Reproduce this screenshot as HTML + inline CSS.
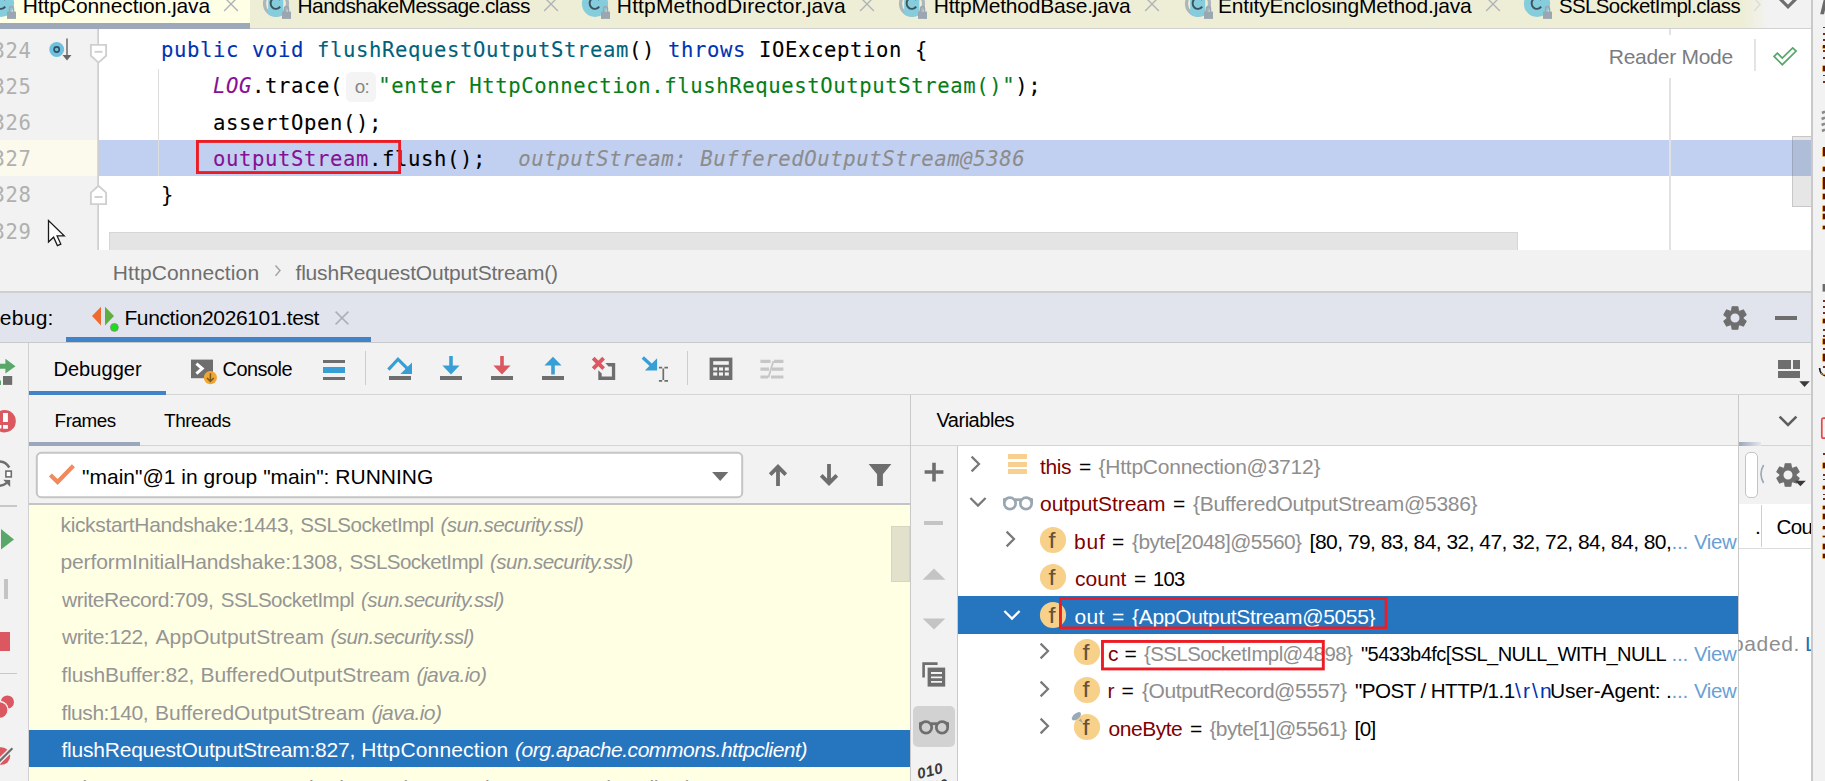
<!DOCTYPE html>
<html lang="en"><head><meta charset="utf-8"><title>HttpConnection.java - Debug</title>
<style>
html,body{margin:0;padding:0;background:#f2f2f2;}
body{width:1825px;height:781px;overflow:hidden;position:relative;font-family:"Liberation Sans", sans-serif;}
#root{position:absolute;left:0;top:0;width:1825px;height:781px;overflow:hidden;}
#root div,#root svg,#root span.t{position:absolute;box-sizing:border-box;}
span.t{white-space:pre;}
.s{font-family:"Liberation Sans", sans-serif;}
.m{font-family:"DejaVu Sans Mono", "Liberation Mono", monospace;}
</style></head><body><div id="root">
<section aria-label="Editor tabs">
<div style="left:0px;top:0px;width:1812px;height:28px;background:#f2f2f2;"></div>
<div style="left:0px;top:0px;width:1770px;height:28px;background:linear-gradient(to right,#eeeed6 0,#eeeed6 1742px,#f2f2f2 1768px);"></div>
<div style="left:0px;top:0px;width:250px;height:24px;background:#ffffe6;"></div>
<div style="left:250px;top:28px;width:1562px;height:1px;background:#d1d1d1;"></div>
<div style="left:0px;top:23px;width:250px;height:6px;background:#9da8bb;"></div>
<svg style="left:-15.1px;top:0px;overflow:hidden;" width="34" height="22" viewBox="0 0 34 22"><circle cx="16" cy="3.8" r="13.1" fill="#85ccdd"/><path d="M20.2 0.0 A5.3 5.6 0 1 0 20.2 6.6" fill="none" stroke="#3a535d" stroke-width="1.9"/><rect x="22" y="11.6" width="9" height="7.3" fill="#9aa7b0"/><path d="M24.5 12 V9 A2 2.4 0 0 1 28.5 9 V12" fill="none" stroke="#9aa7b0" stroke-width="1.5"/></svg>
<span class="t s" style="left:22.7px;top:-5.00px;font-size:21px;line-height:21px;color:#000;letter-spacing:-0.091px;">HttpConnection.java</span>
<svg style="left:221.1px;top:-5.7px;" width="20" height="20" viewBox="0 0 20 20"><path d="M3.0999999999999996 3.0999999999999996 L16.9 16.9 M16.9 3.0999999999999996 L3.0999999999999996 16.9" stroke="#b0b4b8" stroke-width="1.4" fill="none"/></svg>
<svg style="left:260px;top:0px;overflow:hidden;" width="34" height="22" viewBox="0 0 34 22"><defs><clipPath id="band276"><rect x="8.2" y="-20" width="15.1" height="60"/></clipPath></defs><circle cx="16" cy="3.8" r="11.5" fill="none" stroke="#adb6ba" stroke-width="3.2"/><circle cx="16" cy="3.8" r="13.1" fill="#85ccdd" clip-path="url(#band276)"/><path d="M20.2 0.0 A5.3 5.6 0 1 0 20.2 6.6" fill="none" stroke="#3a535d" stroke-width="1.9"/><rect x="22" y="11.6" width="9" height="7.3" fill="#9aa7b0"/><path d="M24.5 12 V9 A2 2.4 0 0 1 28.5 9 V12" fill="none" stroke="#9aa7b0" stroke-width="1.5"/></svg>
<span class="t s" style="left:297.5px;top:-4.00px;font-size:20.95px;line-height:20.95px;color:#000;letter-spacing:-0.544px;">HandshakeMessage.class</span>
<svg style="left:540.6px;top:-5.7px;" width="20" height="20" viewBox="0 0 20 20"><path d="M3.0999999999999996 3.0999999999999996 L16.9 16.9 M16.9 3.0999999999999996 L3.0999999999999996 16.9" stroke="#b0b4b8" stroke-width="1.4" fill="none"/></svg>
<svg style="left:579.1px;top:0px;overflow:hidden;" width="34" height="22" viewBox="0 0 34 22"><circle cx="16" cy="3.8" r="13.1" fill="#85ccdd"/><path d="M20.2 0.0 A5.3 5.6 0 1 0 20.2 6.6" fill="none" stroke="#3a535d" stroke-width="1.9"/><rect x="22" y="11.6" width="9" height="7.3" fill="#9aa7b0"/><path d="M24.5 12 V9 A2 2.4 0 0 1 28.5 9 V12" fill="none" stroke="#9aa7b0" stroke-width="1.5"/></svg>
<span class="t s" style="left:616.8px;top:-5.00px;font-size:21px;line-height:21px;color:#000;letter-spacing:0.164px;">HttpMethodDirector.java</span>
<svg style="left:856.6px;top:-5.7px;" width="20" height="20" viewBox="0 0 20 20"><path d="M3.0999999999999996 3.0999999999999996 L16.9 16.9 M16.9 3.0999999999999996 L3.0999999999999996 16.9" stroke="#b0b4b8" stroke-width="1.4" fill="none"/></svg>
<svg style="left:896px;top:0px;overflow:hidden;" width="34" height="22" viewBox="0 0 34 22"><defs><clipPath id="band912"><rect x="8.2" y="-20" width="15.1" height="60"/></clipPath></defs><circle cx="16" cy="3.8" r="11.5" fill="none" stroke="#adb6ba" stroke-width="3.2"/><circle cx="16" cy="3.8" r="13.1" fill="#85ccdd" clip-path="url(#band912)"/><path d="M20.2 0.0 A5.3 5.6 0 1 0 20.2 6.6" fill="none" stroke="#3a535d" stroke-width="1.9"/><rect x="22" y="11.6" width="9" height="7.3" fill="#9aa7b0"/><path d="M24.5 12 V9 A2 2.4 0 0 1 28.5 9 V12" fill="none" stroke="#9aa7b0" stroke-width="1.5"/></svg>
<span class="t s" style="left:933.8px;top:-5.00px;font-size:21px;line-height:21px;color:#000;letter-spacing:-0.217px;">HttpMethodBase.java</span>
<svg style="left:1141.6px;top:-5.7px;" width="20" height="20" viewBox="0 0 20 20"><path d="M3.0999999999999996 3.0999999999999996 L16.9 16.9 M16.9 3.0999999999999996 L3.0999999999999996 16.9" stroke="#b0b4b8" stroke-width="1.4" fill="none"/></svg>
<svg style="left:1181.5px;top:0px;overflow:hidden;" width="34" height="22" viewBox="0 0 34 22"><defs><clipPath id="band1197"><rect x="8.2" y="-20" width="15.1" height="60"/></clipPath></defs><circle cx="16" cy="3.8" r="11.5" fill="none" stroke="#adb6ba" stroke-width="3.2"/><circle cx="16" cy="3.8" r="13.1" fill="#85ccdd" clip-path="url(#band1197)"/><path d="M20.2 0.0 A5.3 5.6 0 1 0 20.2 6.6" fill="none" stroke="#3a535d" stroke-width="1.9"/><rect x="22" y="11.6" width="9" height="7.3" fill="#9aa7b0"/><path d="M24.5 12 V9 A2 2.4 0 0 1 28.5 9 V12" fill="none" stroke="#9aa7b0" stroke-width="1.5"/></svg>
<span class="t s" style="left:1218px;top:-5.00px;font-size:21px;line-height:21px;color:#000;letter-spacing:-0.172px;">EntityEnclosingMethod.java</span>
<svg style="left:1482.6px;top:-5.7px;" width="20" height="20" viewBox="0 0 20 20"><path d="M3.0999999999999996 3.0999999999999996 L16.9 16.9 M16.9 3.0999999999999996 L3.0999999999999996 16.9" stroke="#b0b4b8" stroke-width="1.4" fill="none"/></svg>
<svg style="left:1521px;top:0px;overflow:hidden;" width="34" height="22" viewBox="0 0 34 22"><circle cx="16" cy="3.8" r="13.1" fill="#85ccdd"/><path d="M20.2 0.0 A5.3 5.6 0 1 0 20.2 6.6" fill="none" stroke="#3a535d" stroke-width="1.9"/><rect x="22" y="11.6" width="9" height="7.3" fill="#9aa7b0"/><path d="M24.5 12 V9 A2 2.4 0 0 1 28.5 9 V12" fill="none" stroke="#9aa7b0" stroke-width="1.5"/></svg>
<span class="t s" style="left:1558.9px;top:-4.00px;font-size:20.43px;line-height:20.43px;color:#000;letter-spacing:-0.561px;">SSLSocketImpl.class</span>
<svg style="left:1750px;top:0px;" width="16" height="14" viewBox="0 0 16 14"><path d="M4 -2 L10 4.5 L4 11" fill="none" stroke="#e0dfd6" stroke-width="1.6"/></svg>
<svg style="left:1774px;top:0px;" width="28" height="12" viewBox="0 0 28 12"><path d="M3.8 -3.4 L14 6.8 L24.2 -3.4" fill="none" stroke="#6e6e6e" stroke-width="3.2"/></svg>
</section>
<section aria-label="Code editor">
<div style="left:0px;top:29px;width:1812px;height:221px;background:#fff;"></div>
<div style="left:0px;top:28.5px;width:98px;height:222px;background:#f2f2f2;"></div>
<div style="left:97px;top:29px;width:1px;height:221px;background:#d9d9d9;"></div>
<div style="left:98px;top:29px;width:1px;height:221px;background:#cfcfcf;"></div>
<div style="left:99px;top:140px;width:1713px;height:36px;background:#c1d0f0;"></div>
<div style="left:0px;top:140px;width:97px;height:36px;background:#fcfaed;"></div>
<div style="left:158px;top:69px;width:1.4px;height:107px;background:#dedede;"></div>
<div style="left:1669px;top:29px;width:2px;height:5.5px;background:#e2e2e2;"></div>
<div style="left:1669px;top:78px;width:2px;height:172px;background:#e2e2e2;"></div>
<div style="left:109px;top:231.5px;width:1409px;height:19px;background:#e4e4e4;border:1px solid #d6d6d6;border-bottom:none;"></div>
<span class="t m" style="left:-7.6px;top:41.00px;font-size:20.6px;line-height:20.6px;color:#b0b0b0;letter-spacing:0.599px;">324</span>
<span class="t m" style="left:-7.6px;top:77.10px;font-size:20.6px;line-height:20.6px;color:#b0b0b0;letter-spacing:0.599px;">325</span>
<span class="t m" style="left:-7.6px;top:113.20px;font-size:20.6px;line-height:20.6px;color:#b0b0b0;letter-spacing:0.599px;">326</span>
<span class="t m" style="left:-7.6px;top:149.30px;font-size:20.6px;line-height:20.6px;color:#b0b0b0;letter-spacing:0.599px;">327</span>
<span class="t m" style="left:-7.6px;top:185.40px;font-size:20.6px;line-height:20.6px;color:#b0b0b0;letter-spacing:0.599px;">328</span>
<span class="t m" style="left:-7.6px;top:221.50px;font-size:20.6px;line-height:20.6px;color:#b0b0b0;letter-spacing:0.599px;">329</span>
<span class="t m" style="left:161.0px;top:40.30px;font-size:20.6px;line-height:20.6px;color:#0033b3;letter-spacing:0.601px;-webkit-text-stroke:0.1px;">public void</span>
<span class="t m" style="left:317.0px;top:40.30px;font-size:20.6px;line-height:20.6px;color:#00627a;letter-spacing:0.601px;-webkit-text-stroke:0.1px;">flushRequestOutputStream</span>
<span class="t m" style="left:629.0px;top:40.30px;font-size:20.6px;line-height:20.6px;color:#000;letter-spacing:0.594px;-webkit-text-stroke:0.1px;">()</span>
<span class="t m" style="left:668.0px;top:40.30px;font-size:20.6px;line-height:20.6px;color:#0033b3;letter-spacing:0.599px;-webkit-text-stroke:0.1px;">throws</span>
<span class="t m" style="left:759.0px;top:40.30px;font-size:20.6px;line-height:20.6px;color:#000;letter-spacing:0.601px;-webkit-text-stroke:0.1px;">IOException {</span>
<span class="t m" style="left:213.0px;top:76.40px;font-size:20.6px;line-height:20.6px;color:#871094;letter-spacing:0.599px;font-style:italic;-webkit-text-stroke:0.1px;">LOG</span>
<span class="t m" style="left:252.0px;top:76.40px;font-size:20.6px;line-height:20.6px;color:#000;letter-spacing:0.600px;-webkit-text-stroke:0.1px;">.trace(</span>
<div style="left:346px;top:71.6px;width:30px;height:30px;background:#f4f4f4;border-radius:5.5px;"></div>
<span class="t s" style="left:354.7px;top:78.20px;font-size:18.85px;line-height:18.85px;color:#868686;letter-spacing:-0.680px;">o:</span>
<span class="t m" style="left:378.2px;top:76.40px;font-size:20.6px;line-height:20.6px;color:#067d17;letter-spacing:0.601px;-webkit-text-stroke:0.1px;">&quot;enter HttpConnection.flushRequestOutputStream()&quot;</span>
<span class="t m" style="left:1015.2px;top:76.40px;font-size:20.6px;line-height:20.6px;color:#000;letter-spacing:0.594px;-webkit-text-stroke:0.1px;">);</span>
<span class="t m" style="left:213.0px;top:112.50px;font-size:20.6px;line-height:20.6px;color:#000;letter-spacing:0.601px;-webkit-text-stroke:0.1px;">assertOpen();</span>
<span class="t m" style="left:213.0px;top:148.60px;font-size:20.6px;line-height:20.6px;color:#871094;letter-spacing:0.600px;-webkit-text-stroke:0.1px;">outputStream</span>
<span class="t m" style="left:369.0px;top:148.60px;font-size:20.6px;line-height:20.6px;color:#000;letter-spacing:0.601px;-webkit-text-stroke:0.1px;">.flush();</span>
<span class="t m" style="left:518.3px;top:148.60px;font-size:20.6px;line-height:20.6px;color:#8c8c8c;letter-spacing:0.601px;font-style:italic;-webkit-text-stroke:0.1px;">outputStream: BufferedOutputStream@5386</span>
<span class="t m" style="left:161.0px;top:184.70px;font-size:20.6px;line-height:20.6px;color:#000;letter-spacing:0.594px;-webkit-text-stroke:0.1px;">}</span>
<svg style="left:196px;top:139.9px;" width="205.10000000000002" height="34.0" viewBox="0 0 205.10000000000002 34.0"><rect x="1.45" y="1.45" width="202.20" height="31.10" fill="none" stroke="#ed1c24" stroke-width="2.9"/></svg>
<svg style="left:46px;top:36px;" width="28" height="28" viewBox="0 0 28 28"><circle cx="10.7" cy="13.5" r="7.4" fill="#6ec0de"/><circle cx="10.7" cy="13.5" r="2.6" fill="none" stroke="#31505e" stroke-width="1.6"/><path d="M21 2.5 V19" stroke="#686868" stroke-width="1.5" fill="none"/><path d="M16.5 19 H25.5 L21 24.4 Z" fill="#686868"/></svg>
<svg style="left:88px;top:42px;" width="22" height="24" viewBox="0 0 22 24"><path d="M2.9 2.9 H18.1 V13.8 L10.5 20.6 L2.9 13.8 Z" fill="#fff" stroke="#cfcfcf" stroke-width="1.9"/><path d="M6.5 9.8 H14.5" stroke="#cfcfcf" stroke-width="1.9"/></svg>
<svg style="left:88px;top:183px;" width="22" height="24" viewBox="0 0 22 24"><path d="M2.9 21.1 H18.1 V9.6 L10.5 2.8 L2.9 9.6 Z" fill="#fff" stroke="#cfcfcf" stroke-width="1.9"/><path d="M6.5 14 H14.5" stroke="#cfcfcf" stroke-width="1.9"/></svg>
<span class="t s" style="left:1608.8px;top:46.00px;font-size:21px;line-height:21px;color:#7a7c82;letter-spacing:-0.296px;">Reader Mode</span>
<div style="left:1754px;top:39px;width:2px;height:32px;background:#e4e4e4;"></div>
<svg style="left:1770px;top:44px;" width="30" height="24" viewBox="0 0 30 24"><path d="M4.1 12.4 L7.4 9.1 L12.3 14 L22.7 3.9 L26.1 7.1 L12.3 20.7 Z" fill="none" stroke="#57a76b" stroke-width="1.7" stroke-linejoin="miter"/></svg>
<div style="left:1792px;top:135.5px;width:20px;height:71px;background:rgba(80,80,80,0.14);border:1px solid rgba(90,90,90,0.22);"></div>
<svg style="left:46px;top:218px;" width="24" height="32" viewBox="0 0 24 32"><path d="M2.5 2.5 V24 L7.6 19.2 L11.4 27.6 L14.8 26.1 L11.1 17.9 H18.2 Z" fill="#fff" stroke="#1a1a1a" stroke-width="1.3" stroke-linejoin="miter"/></svg>
</section>
<section aria-label="Breadcrumbs">
<div style="left:0px;top:250px;width:1812px;height:41.5px;background:#f2f2f2;"></div>
<span class="t s" style="left:112.8px;top:262.00px;font-size:21px;line-height:21px;color:#6e6e6e;letter-spacing:0.117px;">HttpConnection</span>
<svg style="left:272px;top:262px;" width="12" height="18" viewBox="0 0 12 18"><path d="M3.5 3.5 L8 8.6 L3.5 13.7" fill="none" stroke="#a0a0a0" stroke-width="1.4"/></svg>
<span class="t s" style="left:295.5px;top:262.00px;font-size:21px;line-height:21px;color:#6e6e6e;letter-spacing:-0.192px;">flushRequestOutputStream()</span>
<div style="left:0px;top:291px;width:1812px;height:2px;background:#cfcfcf;"></div>
</section>
<section aria-label="Debug tool window header">
<div style="left:0px;top:293px;width:1812px;height:49px;background:#e1e4ed;"></div>
<div style="left:0px;top:341.8px;width:1812px;height:1.2px;background:#c9c9cc;"></div>
<span class="t s" style="left:-15.58px;top:307.00px;font-size:21px;line-height:21px;color:#000;letter-spacing:0.260px;">Debug:</span>
<svg style="left:90px;top:304px;" width="32" height="30" viewBox="0 0 32 30"><path d="M11 2.8 V21.4 L2 12.1 Z" fill="#ee6b2f"/><path d="M15 2.8 V21.4 L24 12.1 Z" fill="#5fae40"/><circle cx="24.4" cy="23.4" r="4.9" fill="#e1e4ed"/><circle cx="24.4" cy="23.4" r="3.9" fill="#17e017" stroke="#7d8f7d" stroke-width="0.9"/></svg>
<span class="t s" style="left:124.4px;top:307.00px;font-size:21px;line-height:21px;color:#000;letter-spacing:-0.366px;">Function2026101.test</span>
<svg style="left:332px;top:308px;" width="20" height="20" viewBox="0 0 20 20"><path d="M3.5999999999999996 3.5999999999999996 L16.4 16.4 M16.4 3.5999999999999996 L3.5999999999999996 16.4" stroke="#aab0b6" stroke-width="1.5" fill="none"/></svg>
<div style="left:66px;top:337.4px;width:304.5px;height:5px;background:#4083c9;"></div>
<svg style="left:1720px;top:302.9px;" width="30" height="30" viewBox="0 0 30 30"><path d="M12.13 3.76 L17.87 3.76 L18.40 7.65 L19.66 8.38 L23.30 6.89 L26.17 11.87 L23.07 14.27 L23.07 15.73 L26.17 18.13 L23.30 23.11 L19.66 21.62 L18.40 22.35 L17.87 26.24 L12.13 26.24 L11.60 22.35 L10.34 21.62 L6.70 23.11 L3.83 18.13 L6.93 15.73 L6.93 14.27 L3.83 11.87 L6.70 6.89 L10.34 8.38 L11.60 7.65 Z M19.50 15.00 A4.5 4.5 0 1 0 10.50 15.00 A4.5 4.5 0 1 0 19.50 15.00 Z" fill="#6e6e6e" fill-rule="evenodd"/><path d="M12.13 3.76 L17.87 3.76 L18.40 7.65 L19.66 8.38 L23.30 6.89 L26.17 11.87 L23.07 14.27 L23.07 15.73 L26.17 18.13 L23.30 23.11 L19.66 21.62 L18.40 22.35 L17.87 26.24 L12.13 26.24 L11.60 22.35 L10.34 21.62 L6.70 23.11 L3.83 18.13 L6.93 15.73 L6.93 14.27 L3.83 11.87 L6.70 6.89 L10.34 8.38 L11.60 7.65 Z" fill="none" stroke="#6e6e6e" stroke-width="1.1" stroke-linejoin="round"/></svg>
<div style="left:1774.6px;top:315.8px;width:22.6px;height:4.2px;background:#6e6e6e;"></div>
</section>
<section aria-label="Debugger toolbar">
<div style="left:0px;top:343px;width:1812px;height:51.4px;background:#f2f2f2;"></div>
<div style="left:29px;top:394.2px;width:1783px;height:1.2px;background:#d4d4d4;"></div>
<div style="left:28px;top:343px;width:1.2px;height:438px;background:#d0d0d0;"></div>
<span class="t s" style="left:53.4px;top:359.00px;font-size:20px;line-height:20px;color:#000;letter-spacing:0.060px;">Debugger</span>
<div style="left:29px;top:391px;width:137px;height:4.4px;background:#4083c9;"></div>
<svg style="left:188px;top:356px;" width="32" height="32" viewBox="0 0 32 32"><rect x="3" y="3.6" width="22" height="18.6" fill="#6e6e6e"/><path d="M8.4 7.6 L14.2 12.6 L8.4 17.6" fill="none" stroke="#fff" stroke-width="3"/><circle cx="22.4" cy="21.6" r="6.6" fill="#f2a632"/><path d="M22.4 17.2 V25 M19 22 L22.4 25.4 L25.8 22" fill="none" stroke="#7a5a20" stroke-width="1.6"/></svg>
<span class="t s" style="left:222.6px;top:360.00px;font-size:19.96px;line-height:19.96px;color:#000;letter-spacing:-0.544px;">Console</span>
<div style="left:323px;top:359.6px;width:22.4px;height:3.4px;background:#6e6e6e;"></div>
<div style="left:323px;top:367.2px;width:22.4px;height:5.4px;background:#389fd6;"></div>
<div style="left:323px;top:376.6px;width:22.4px;height:3.4px;background:#6e6e6e;"></div>
<div style="left:365px;top:351px;width:1.3px;height:34px;background:#cdcdcd;"></div>
<div style="left:388.6px;top:376.4px;width:22.8px;height:3.6px;background:#6e6e6e;"></div>
<svg style="left:384.6px;top:352.7px;" width="30" height="24" viewBox="0 0 30 24"><path d="M3.4 16.6 L13 6.2 L22.4 15.6" fill="none" stroke="#389fd6" stroke-width="3.2" stroke-linejoin="miter"/><path d="M27 9.4 V21 H15.4 Z" fill="#389fd6"/></svg>
<div style="left:439.6px;top:376.4px;width:22.8px;height:3.6px;background:#6e6e6e;"></div>
<svg style="left:436px;top:354px;" width="30" height="24" viewBox="0 0 30 24"><path d="M13.2 2 H16.8 V11.5 H23.6 L15 20.4 L6.4 11.5 H13.2 Z" fill="#389fd6"/></svg>
<div style="left:490.6px;top:376.4px;width:22.8px;height:3.6px;background:#6e6e6e;"></div>
<svg style="left:487px;top:354px;" width="30" height="24" viewBox="0 0 30 24"><path d="M13.2 2 H16.8 V11.5 H23.6 L15 20.4 L6.4 11.5 H13.2 Z" fill="#db5860"/></svg>
<div style="left:541.6px;top:376.4px;width:22.8px;height:3.6px;background:#6e6e6e;"></div>
<svg style="left:538px;top:354px;" width="30" height="24" viewBox="0 0 30 24"><path d="M13.2 20.6 H16.8 V11.6 H23.6 L15 2.8 L6.4 11.6 H13.2 Z" fill="#389fd6"/></svg>
<svg style="left:588px;top:354px;" width="30" height="30" viewBox="0 0 30 30"><path d="M5.2 4.2 L15.6 14.6 M15.6 4.2 L5.2 14.6" stroke="#db5860" stroke-width="3.9" fill="none"/><path d="M17.3 9.1 H27.2 V25.9 H10.3 V16.2 L13.7 19.6 V22.6 H23.9 V12.4 H20.6 Z" fill="#6e6e6e"/></svg>
<svg style="left:638px;top:352.4px;" width="34" height="32" viewBox="0 0 34 32"><path d="M4.8 5.6 L16.2 16" stroke="#389fd6" stroke-width="3.4" fill="none"/><path d="M19.1 6.2 V18.6 H6.9 Z" fill="#389fd6"/><path d="M20.9 15.7 H24.2 M26.4 15.7 H30 M20.9 28.9 H24.2 M26.4 28.9 H30 M25.3 16.6 V28" stroke="#6e6e6e" stroke-width="1.7" fill="none"/></svg>
<div style="left:686.6px;top:351px;width:1.3px;height:34px;background:#cdcdcd;"></div>
<svg style="left:708px;top:356px;" width="28" height="26" viewBox="0 0 28 26"><rect x="1.6" y="1.6" width="22.8" height="22.4" fill="#6e6e6e"/><rect x="5.2" y="5.2" width="15.6" height="3.6" fill="#f2f2f2"/><rect x="5.2" y="11.4" width="4" height="3.2" fill="#f2f2f2"/><rect x="5.2" y="16.4" width="4" height="3.2" fill="#f2f2f2"/><rect x="11.0" y="11.4" width="4" height="3.2" fill="#f2f2f2"/><rect x="11.0" y="16.4" width="4" height="3.2" fill="#f2f2f2"/><rect x="16.8" y="11.4" width="4" height="3.2" fill="#f2f2f2"/><rect x="16.8" y="16.4" width="4" height="3.2" fill="#f2f2f2"/></svg>
<svg style="left:758px;top:357px;" width="30" height="24" viewBox="0 0 30 24"><path d="M2.4 4.4 H12.6 M16 4.4 H25.4 M2.4 12.2 H11 M14 12.2 H25.4 M2.4 20 H10 M13 20 H25.4" stroke="#c6c6c6" stroke-width="3.2" fill="none"/><path d="M15.4 4 L10.4 20.4" stroke="#c6c6c6" stroke-width="1.8" fill="none"/></svg>
<div style="left:1778px;top:359.7px;width:12.6px;height:9px;background:#6e6e6e;"></div>
<div style="left:1793px;top:359.7px;width:7.4px;height:9px;background:#6e6e6e;"></div>
<div style="left:1778px;top:371px;width:22.4px;height:7.4px;background:#6e6e6e;"></div>
<svg style="left:1798px;top:380px;" width="14" height="8" viewBox="0 0 14 8"><path d="M1.3 1.3 H11.8 L6.5 7 Z" fill="#3a3a3a"/></svg>
</section>
<section aria-label="Debug actions">
<svg style="left:0px;top:356px;" width="28" height="32" viewBox="0 0 28 32"><path d="M-3 7.7 H5.4 V2.8 L15.5 10.2 L5.4 17.6 V12.7 H-3 Z" fill="#59a869"/><path d="M-2 24.6 H1 V29 H-2 Z" fill="#59a869"/><rect x="3" y="20" width="9.2" height="8.9" fill="#6e6e6e"/></svg>
<svg style="left:0px;top:406px;" width="28" height="30" viewBox="0 0 28 30"><circle cx="4.6" cy="15.2" r="11.2" fill="#db5860"/><path d="M3 7 H7.9 V16 H3 Z M3 19 H7.9 V22.8 H3 Z" fill="#fff"/><path d="M-2 19 H1.4 V22.4 H-2 Z" fill="#fff"/></svg>
<svg style="left:0px;top:458px;" width="28" height="34" viewBox="0 0 28 34"><path d="M-3 3.56 A12.2 12.2 0 0 1 9.3 9.5" fill="none" stroke="#6e6e6e" stroke-width="2.5"/><path d="M6.8 24.9 A12.2 12.2 0 0 1 -3 27.6" fill="none" stroke="#6e6e6e" stroke-width="2.5"/><path d="M3.2 21.7 L10.2 22 L10.2 29 Z" fill="#6e6e6e"/><rect x="5.9" y="13.1" width="5.4" height="5.8" fill="#fff" stroke="#6e6e6e" stroke-width="1.6"/></svg>
<div style="left:0px;top:505.4px;width:17px;height:1.2px;background:#c8c8c8;"></div>
<svg style="left:0px;top:526px;" width="20" height="26" viewBox="0 0 20 26"><path d="M1 3 L14 13.4 L1 23.6 Z" fill="#59a869"/></svg>
<div style="left:4px;top:579px;width:4.2px;height:20px;background:#c4c4c4;"></div>
<div style="left:0px;top:632px;width:10.4px;height:18.6px;background:#db5860;"></div>
<div style="left:0px;top:673px;width:17px;height:1.2px;background:#c8c8c8;"></div>
<svg style="left:0px;top:690px;" width="20" height="32" viewBox="0 0 20 32"><circle cx="7.4" cy="12" r="6.6" fill="#db5860"/><circle cx="-0.4" cy="20" r="9.2" fill="#f2f2f2"/><circle cx="-0.4" cy="20" r="7.8" fill="#db5860"/></svg>
<svg style="left:0px;top:742px;" width="20" height="30" viewBox="0 0 20 30"><circle cx="1.4" cy="14" r="8.8" fill="#db5860"/><path d="M-2 20.6 L12.4 6.2" stroke="#f2f2f2" stroke-width="5"/><path d="M-2 20.6 L12.4 6.2" stroke="#6e6e6e" stroke-width="2.2"/></svg>
</section>
<section aria-label="Panel headers">
<div style="left:29.2px;top:395.4px;width:1783px;height:50px;background:#f2f2f2;"></div>
<div style="left:29.2px;top:445px;width:1783px;height:1.2px;background:#d4d4d4;"></div>
<span class="t s" style="left:54.6px;top:412.00px;font-size:18.82px;line-height:18.82px;color:#000;letter-spacing:-0.450px;">Frames</span>
<span class="t s" style="left:164.0px;top:411.00px;font-size:19.0px;line-height:19.0px;color:#000;letter-spacing:-0.467px;">Threads</span>
<div style="left:29.2px;top:441.6px;width:111px;height:4.4px;background:#9ba7bd;"></div>
<div style="left:910px;top:395.4px;width:1.2px;height:386px;background:#c9c9c9;"></div>
<span class="t s" style="left:936.4px;top:410.00px;font-size:20px;line-height:20px;color:#000;letter-spacing:-0.462px;">Variables</span>
<div style="left:1738px;top:395.4px;width:1.2px;height:386px;background:#c9c9c9;"></div>
<svg style="left:1774px;top:410px;" width="28" height="22" viewBox="0 0 28 22"><path d="M5.6 6.6 L14 15 L22.4 6.6" fill="none" stroke="#5e5e5e" stroke-width="2.6"/></svg>
<div style="left:1739.2px;top:442.2px;width:22px;height:3.6px;background:linear-gradient(to right,#9ba7bd,#e4e6ec);"></div>
</section>
<section aria-label="Thread selector">
<div style="left:29.2px;top:446.2px;width:881px;height:58px;background:#f2f2f2;"></div>
<svg style="left:34.6px;top:451.4px;" width="709" height="48" viewBox="0 0 709 48"><rect x="1.8" y="1.8" width="705.4" height="44.4" rx="4.5" fill="#fff" stroke="#c5c5c5" stroke-width="2"/></svg>
<svg style="left:46px;top:460px;" width="34" height="28" viewBox="0 0 34 28"><path d="M4.4 15 L11.6 22 L27.4 5.8" fill="none" stroke="#f08a5d" stroke-width="4.2"/></svg>
<span class="t s" style="left:82.0px;top:466.00px;font-size:21px;line-height:21px;color:#000;letter-spacing:0.008px;">&quot;main&quot;@1 in group &quot;main&quot;: RUNNING</span>
<svg style="left:710px;top:470px;" width="20" height="12" viewBox="0 0 20 12"><path d="M2.1 1.9 H18.3 L10.2 11 Z" fill="#6e6e6e"/></svg>
<svg style="left:764px;top:460px;" width="28" height="30" viewBox="0 0 28 30"><path d="M14 7 V26 M6.2 14.6 L14 6.8 L21.8 14.6" fill="none" stroke="#6e6e6e" stroke-width="3.8"/></svg>
<svg style="left:815px;top:460px;" width="28" height="30" viewBox="0 0 28 30"><path d="M14 4 V23 M6.2 15.4 L14 23.2 L21.8 15.4" fill="none" stroke="#6e6e6e" stroke-width="3.8"/></svg>
<svg style="left:866px;top:460px;" width="28" height="30" viewBox="0 0 28 30"><path d="M2.6 4 H25.4 L16.9 14.2 V26 H11.1 V14.2 Z" fill="#6e6e6e"/></svg>
</section>
<section aria-label="Frames">
<div style="left:29.2px;top:503.4px;width:881px;height:278px;background:#ffffe4;"></div>
<div style="left:29.2px;top:503.2px;width:881px;height:1.8px;background:#c4c4c4;"></div>
<div style="left:891.2px;top:526px;width:18.8px;height:56.2px;background:#e2e2cc;border:1px solid #d6d6c0;"></div>
<span class="t s" style="left:60.5px;top:514.00px;font-size:21px;line-height:21px;color:#959595;letter-spacing:-0.352px;">kickstartHandshake:1443,</span>
<span class="t s" style="left:300.2px;top:515.00px;font-size:20.56px;line-height:20.56px;color:#959595;letter-spacing:-0.550px;">SSLSocketImpl</span>
<span class="t s" style="left:440.5px;top:515.00px;font-size:20.58px;line-height:20.58px;color:#959595;letter-spacing:-0.558px;font-style:italic;">(sun.security.ssl)</span>
<span class="t s" style="left:60.5px;top:551.00px;font-size:21px;line-height:21px;color:#959595;letter-spacing:-0.120px;">performInitialHandshake:1308,</span>
<span class="t s" style="left:349.6px;top:552.00px;font-size:20.57px;line-height:20.57px;color:#959595;letter-spacing:-0.550px;">SSLSocketImpl</span>
<span class="t s" style="left:490.0px;top:552.00px;font-size:20.58px;line-height:20.58px;color:#959595;letter-spacing:-0.558px;font-style:italic;">(sun.security.ssl)</span>
<span class="t s" style="left:62.0px;top:589.00px;font-size:21px;line-height:21px;color:#959595;letter-spacing:-0.460px;">writeRecord:709,</span>
<span class="t s" style="left:220.8px;top:590.00px;font-size:20.54px;line-height:20.54px;color:#959595;letter-spacing:-0.550px;">SSLSocketImpl</span>
<span class="t s" style="left:361.0px;top:590.00px;font-size:20.58px;line-height:20.58px;color:#959595;letter-spacing:-0.558px;font-style:italic;">(sun.security.ssl)</span>
<span class="t s" style="left:62.0px;top:626.00px;font-size:21px;line-height:21px;color:#959595;letter-spacing:-0.501px;">write:122,</span>
<span class="t s" style="left:155.5px;top:626.00px;font-size:21px;line-height:21px;color:#959595;letter-spacing:0.029px;">AppOutputStream</span>
<span class="t s" style="left:330.5px;top:627.00px;font-size:20.64px;line-height:20.64px;color:#959595;letter-spacing:-0.548px;font-style:italic;">(sun.security.ssl)</span>
<span class="t s" style="left:61.5px;top:664.00px;font-size:21px;line-height:21px;color:#959595;letter-spacing:-0.150px;">flushBuffer:82,</span>
<span class="t s" style="left:200.4px;top:664.00px;font-size:21px;line-height:21px;color:#959595;letter-spacing:-0.007px;">BufferedOutputStream</span>
<span class="t s" style="left:416.5px;top:664.00px;font-size:21px;line-height:21px;color:#959595;letter-spacing:-0.525px;font-style:italic;">(java.io)</span>
<span class="t s" style="left:61.5px;top:702.00px;font-size:21px;line-height:21px;color:#959595;letter-spacing:-0.448px;">flush:140,</span>
<span class="t s" style="left:155px;top:702.00px;font-size:21px;line-height:21px;color:#959595;letter-spacing:0.014px;">BufferedOutputStream</span>
<span class="t s" style="left:371.5px;top:702.00px;font-size:21px;line-height:21px;color:#959595;letter-spacing:-0.525px;font-style:italic;">(java.io)</span>
<div style="left:29.2px;top:730.2px;width:881px;height:36.6px;background:#2675bf;"></div>
<span class="t s" style="left:61.5px;top:739.00px;font-size:21px;line-height:21px;color:#fff;letter-spacing:-0.224px;">flushRequestOutputStream:827,</span>
<span class="t s" style="left:361.2px;top:739.00px;font-size:21px;line-height:21px;color:#fff;letter-spacing:0.171px;">HttpConnection</span>
<span class="t s" style="left:515.0px;top:739.00px;font-size:21px;line-height:21px;color:#fff;letter-spacing:-0.444px;font-style:italic;">(org.apache.commons.httpclient)</span>
<span class="t s" style="left:62.0px;top:778.00px;font-size:20.56px;line-height:20.56px;color:#959595;letter-spacing:-0.549px;">writeRequest:1075,</span>
<span class="t s" style="left:236px;top:777.00px;font-size:21px;line-height:21px;color:#959595;letter-spacing:-0.057px;">HttpMethodBase</span>
<span class="t s" style="left:398.5px;top:777.00px;font-size:21px;line-height:21px;color:#959595;letter-spacing:-0.444px;font-style:italic;">(org.apache.commons.httpclient)</span>
</section>
<section aria-label="Variables toolbar">
<div style="left:911.2px;top:446.2px;width:46px;height:335px;background:#f2f2f2;"></div>
<div style="left:957px;top:446.2px;width:1.2px;height:335px;background:#c9c9c9;"></div>
<svg style="left:920px;top:458px;" width="28" height="28" viewBox="0 0 28 28"><path d="M14 4.8 V23.4 M4.6 14 H23.4" stroke="#6e6e6e" stroke-width="3.6" fill="none"/></svg>
<div style="left:924.4px;top:520.8px;width:19px;height:4px;background:#c4c4c4;"></div>
<svg style="left:920px;top:566px;" width="28" height="16" viewBox="0 0 28 16"><path d="M2.6 13.8 L14 2.6 L25.4 13.8 Z" fill="#c4c4c4"/></svg>
<svg style="left:920px;top:616px;" width="28" height="16" viewBox="0 0 28 16"><path d="M2.6 2.4 L14 13.6 L25.4 2.4 Z" fill="#c4c4c4"/></svg>
<svg style="left:920px;top:660px;" width="28" height="30" viewBox="0 0 28 30"><path d="M3.6 17.4 V3.6 H17.6" fill="none" stroke="#6e6e6e" stroke-width="2.6"/><rect x="7.6" y="7.6" width="17.6" height="19" fill="#6e6e6e"/><path d="M11 13 H22 M11 17.4 H22 M11 21.8 H22" stroke="#f2f2f2" stroke-width="1.8"/></svg>
<div style="left:913px;top:706px;width:41.8px;height:41.2px;background:#d2d2d2;border-radius:5px;"></div>
<svg style="left:916.8px;top:718.4px;" width="34" height="19" viewBox="0 0 34 19"><ellipse cx="9" cy="9.4" rx="5.7" ry="5.7" fill="none" stroke="#6e6e6e" stroke-width="2.7"/><ellipse cx="25" cy="9.4" rx="5.7" ry="5.7" fill="none" stroke="#6e6e6e" stroke-width="2.7"/><path d="M2 9.6 V4.4 L8 2.4 Z M32 9.6 V4.4 L26 2.4 Z" fill="#6e6e6e"/><rect x="14" y="4.3" width="6" height="2.8" fill="#6e6e6e"/></svg>
<span class="t s" style="left:919.0px;top:766.00px;font-size:15px;line-height:15px;color:#3a3a3a;letter-spacing:0.408px;font-style:italic;font-weight:bold;transform:rotate(-14deg);transform-origin:0 100%;">010</span>
<span class="t s" style="left:934.0px;top:780.00px;font-size:14.31px;line-height:14.31px;color:#3a3a3a;letter-spacing:0.049px;font-style:italic;font-weight:bold;transform:rotate(-14deg);transform-origin:0 100%;">10</span>
</section>
<section aria-label="Variables">
<div style="left:958.2px;top:446.2px;width:780px;height:335px;background:#fff;"></div>
<div style="left:958.2px;top:596px;width:780px;height:37.6px;background:#2675bf;"></div>
<svg style="left:966.2px;top:453.20000000000005px;" width="20" height="22" viewBox="0 0 20 22"><path d="M5.6 3.6 L13 11 L5.6 18.4" fill="none" stroke="#787878" stroke-width="2.2"/></svg>
<div style="left:1008.4px;top:454px;width:19px;height:5px;background:#f8cf8f;"></div>
<div style="left:1008.4px;top:461.6px;width:19px;height:5px;background:#f8cf8f;"></div>
<div style="left:1008.4px;top:469.4px;width:19px;height:5px;background:#f8cf8f;"></div>
<span class="t s" style="left:1040.0px;top:456.00px;font-size:21px;line-height:21px;color:#800000;letter-spacing:-0.393px;">this</span>
<span class="t s" style="left:1079px;top:456.00px;font-size:21px;line-height:21px;color:#000;">=</span>
<span class="t s" style="left:1098.6px;top:456.00px;font-size:21px;line-height:21px;color:#8e8e8e;letter-spacing:-0.250px;">{HttpConnection@3712}</span>
<svg style="left:966.4px;top:493px;" width="24" height="18" viewBox="0 0 24 18"><path d="M4.4 5 L12 12.6 L19.6 5" fill="none" stroke="#787878" stroke-width="2.2"/></svg>
<svg style="left:1001px;top:493.8px;" width="34" height="19" viewBox="0 0 34 19"><ellipse cx="9" cy="9.4" rx="5.7" ry="5.7" fill="none" stroke="#9aa7b0" stroke-width="2.7"/><ellipse cx="25" cy="9.4" rx="5.7" ry="5.7" fill="none" stroke="#9aa7b0" stroke-width="2.7"/><path d="M2 9.6 V4.4 L8 2.4 Z M32 9.6 V4.4 L26 2.4 Z" fill="#9aa7b0"/><rect x="14" y="4.3" width="6" height="2.8" fill="#9aa7b0"/></svg>
<span class="t s" style="left:1040.0px;top:493.00px;font-size:21px;line-height:21px;color:#800000;letter-spacing:-0.053px;">outputStream</span>
<span class="t s" style="left:1173px;top:493.00px;font-size:21px;line-height:21px;color:#000;">=</span>
<span class="t s" style="left:1193.0px;top:493.00px;font-size:21px;line-height:21px;color:#8e8e8e;letter-spacing:-0.276px;">{BufferedOutputStream@5386}</span>
<svg style="left:1001.2px;top:528.2px;" width="20" height="22" viewBox="0 0 20 22"><path d="M5.6 3.6 L13 11 L5.6 18.4" fill="none" stroke="#787878" stroke-width="2.2"/></svg>
<svg style="left:1037.1px;top:524px;overflow:visible;" width="32" height="32" viewBox="0 0 32 32"><circle cx="16" cy="16" r="13.1" fill="#f7d08a"/></svg>
<span class="t s" style="left:1049.0px;top:530.60px;font-size:21.5px;line-height:21.5px;color:#65533a;transform:scaleX(1.18);transform-origin:50% 50%;">f</span>
<span class="t s" style="left:1074px;top:531.00px;font-size:21px;line-height:21px;color:#800000;letter-spacing:0.821px;">buf</span>
<span class="t s" style="left:1112px;top:531.00px;font-size:21px;line-height:21px;color:#000;">=</span>
<span class="t s" style="left:1132.0px;top:532.00px;font-size:20.85px;line-height:20.85px;color:#8e8e8e;letter-spacing:-0.552px;">{byte[2048]@5560}</span>
<span class="t s" style="left:1309.6px;top:531.00px;font-size:21px;line-height:21px;color:#000;letter-spacing:-0.536px;">[80, 79, 83, 84, 32, 47, 32, 72, 84, 84, 80,</span>
<span class="t s" style="left:1671.6px;top:531.00px;font-size:21px;line-height:21px;color:#6a9fd6;letter-spacing:-0.334px;">...</span>
<span class="t s" style="left:1694.0px;top:532.00px;font-size:20.4px;line-height:20.4px;color:#6a9fd6;letter-spacing:-0.367px;">View</span>
<svg style="left:1037.1px;top:561.2px;overflow:visible;" width="32" height="32" viewBox="0 0 32 32"><circle cx="16" cy="16" r="13.1" fill="#f7d08a"/></svg>
<span class="t s" style="left:1049.0px;top:567.80px;font-size:21.5px;line-height:21.5px;color:#65533a;transform:scaleX(1.18);transform-origin:50% 50%;">f</span>
<span class="t s" style="left:1075.0px;top:568.00px;font-size:21px;line-height:21px;color:#800000;letter-spacing:0.016px;">count</span>
<span class="t s" style="left:1134px;top:568.00px;font-size:21px;line-height:21px;color:#000;">=</span>
<span class="t s" style="left:1153px;top:569.00px;font-size:20.21px;line-height:20.21px;color:#000;letter-spacing:-0.727px;">103</span>
<svg style="left:1000px;top:606px;" width="24" height="18" viewBox="0 0 24 18"><path d="M4.4 5 L12 12.6 L19.6 5" fill="none" stroke="#fff" stroke-width="2.2"/></svg>
<svg style="left:1037px;top:599px;overflow:visible;" width="32" height="32" viewBox="0 0 32 32"><circle cx="16" cy="16" r="13.1" fill="#f7d08a"/></svg>
<span class="t s" style="left:1048.9px;top:605.60px;font-size:21.5px;line-height:21.5px;color:#65533a;transform:scaleX(1.18);transform-origin:50% 50%;">f</span>
<span class="t s" style="left:1074.6px;top:606.00px;font-size:21px;line-height:21px;color:#fff;letter-spacing:0.321px;">out</span>
<span class="t s" style="left:1112px;top:606.00px;font-size:21px;line-height:21px;color:#fff;">=</span>
<span class="t s" style="left:1132.0px;top:606.00px;font-size:21px;line-height:21px;color:#fff;letter-spacing:-0.311px;">{AppOutputStream@5055}</span>
<svg style="left:1059px;top:596.8px;" width="328.5999999999999" height="32.40000000000009" viewBox="0 0 328.5999999999999 32.40000000000009"><rect x="1.45" y="1.45" width="325.70" height="29.50" fill="none" stroke="#ed1c24" stroke-width="2.9"/></svg>
<svg style="left:1035.2px;top:640.2px;" width="20" height="22" viewBox="0 0 20 22"><path d="M5.6 3.6 L13 11 L5.6 18.4" fill="none" stroke="#787878" stroke-width="2.2"/></svg>
<svg style="left:1071.1px;top:636px;overflow:visible;" width="32" height="32" viewBox="0 0 32 32"><circle cx="16" cy="16" r="13.1" fill="#f7d08a"/></svg>
<span class="t s" style="left:1083.0px;top:642.60px;font-size:21.5px;line-height:21.5px;color:#65533a;transform:scaleX(1.18);transform-origin:50% 50%;">f</span>
<span class="t s" style="left:1108.0px;top:643.00px;font-size:21px;line-height:21px;color:#800000;">c</span>
<span class="t s" style="left:1124.6px;top:643.00px;font-size:21px;line-height:21px;color:#000;">=</span>
<span class="t s" style="left:1144.0px;top:644.00px;font-size:20.43px;line-height:20.43px;color:#8e8e8e;letter-spacing:-0.558px;">{SSLSocketImpl@4898}</span>
<span class="t s" style="left:1361.0px;top:644.00px;font-size:20.1px;line-height:20.1px;color:#000;letter-spacing:-0.563px;">&quot;5433b4fc[SSL_NULL_WITH_NULL</span>
<span class="t s" style="left:1668.6px;top:643.00px;font-size:21px;line-height:21px;color:#000;clip-path:inset(0 9.6px 0 0);">_</span>
<span class="t s" style="left:1671.6px;top:643.00px;font-size:21px;line-height:21px;color:#6a9fd6;letter-spacing:-0.334px;">...</span>
<span class="t s" style="left:1694.0px;top:644.00px;font-size:20.4px;line-height:20.4px;color:#6a9fd6;letter-spacing:-0.367px;">View</span>
<svg style="left:1101.4px;top:640.4px;" width="223.79999999999995" height="30.399999999999977" viewBox="0 0 223.79999999999995 30.399999999999977"><rect x="1.45" y="1.45" width="220.90" height="27.50" fill="none" stroke="#ed1c24" stroke-width="2.9"/></svg>
<svg style="left:1035.2px;top:677.6px;" width="20" height="22" viewBox="0 0 20 22"><path d="M5.6 3.6 L13 11 L5.6 18.4" fill="none" stroke="#787878" stroke-width="2.2"/></svg>
<svg style="left:1071.1px;top:673.6px;overflow:visible;" width="32" height="32" viewBox="0 0 32 32"><circle cx="16" cy="16" r="13.1" fill="#f7d08a"/></svg>
<span class="t s" style="left:1083.0px;top:680.20px;font-size:21.5px;line-height:21.5px;color:#65533a;transform:scaleX(1.18);transform-origin:50% 50%;">f</span>
<span class="t s" style="left:1107.6px;top:680.00px;font-size:21px;line-height:21px;color:#800000;">r</span>
<span class="t s" style="left:1121.6px;top:680.00px;font-size:21px;line-height:21px;color:#000;">=</span>
<span class="t s" style="left:1142.0px;top:680.00px;font-size:21px;line-height:21px;color:#8e8e8e;letter-spacing:-0.433px;">{OutputRecord@5557}</span>
<span class="t s" style="left:1355.0px;top:681.00px;font-size:20.62px;line-height:20.62px;color:#000;letter-spacing:-0.555px;">&quot;POST / HTTP/1.1</span>
<span class="t s" style="left:1515.0px;top:680.00px;font-size:21px;line-height:21px;color:#0033b3;letter-spacing:2.113px;">\r\n</span>
<span class="t s" style="left:1550px;top:680.00px;font-size:21px;line-height:21px;color:#000;letter-spacing:-0.157px;">User-Agent: .</span>
<span class="t s" style="left:1671.6px;top:680.00px;font-size:21px;line-height:21px;color:#6a9fd6;letter-spacing:-0.334px;">...</span>
<span class="t s" style="left:1694.0px;top:681.00px;font-size:20.4px;line-height:20.4px;color:#6a9fd6;letter-spacing:-0.367px;">View</span>
<svg style="left:1035.2px;top:715.0px;" width="20" height="22" viewBox="0 0 20 22"><path d="M5.6 3.6 L13 11 L5.6 18.4" fill="none" stroke="#787878" stroke-width="2.2"/></svg>
<svg style="left:1071.1px;top:711px;overflow:visible;" width="32" height="32" viewBox="0 0 32 32"><circle cx="16" cy="16" r="13.1" fill="#f7d08a"/><ellipse cx="5.4" cy="5.3" rx="5.5" ry="2.9" transform="rotate(-40 5.4 5.3)" fill="#9aaab8"/><path d="M7.6 9.4 L9.9 7.6 L12 11.9 Z" fill="#9aaab8"/></svg>
<span class="t s" style="left:1083.0px;top:717.60px;font-size:21.5px;line-height:21.5px;color:#65533a;transform:scaleX(1.18);transform-origin:50% 50%;">f</span>
<span class="t s" style="left:1108.6px;top:718.00px;font-size:21px;line-height:21px;color:#800000;letter-spacing:-0.496px;">oneByte</span>
<span class="t s" style="left:1190px;top:718.00px;font-size:21px;line-height:21px;color:#000;">=</span>
<span class="t s" style="left:1209.4px;top:719.00px;font-size:20.95px;line-height:20.95px;color:#8e8e8e;letter-spacing:-0.544px;">{byte[1]@5561}</span>
<span class="t s" style="left:1354.6px;top:719.00px;font-size:20.6px;line-height:20.6px;color:#000;letter-spacing:-0.587px;">[0]</span>
</section>
<section aria-label="Side panel">
<div style="left:1739.2px;top:446.2px;width:73px;height:57.4px;background:#f2f2f2;"></div>
<div style="left:1739.2px;top:503.6px;width:73px;height:278px;background:#fff;"></div>
<div style="left:1745px;top:452.4px;width:13.4px;height:45.8px;background:#fff;border:1.4px solid #c4c4c4;border-radius:5px;"></div>
<svg style="left:1757px;top:462px;" width="8" height="26" viewBox="0 0 8 26"><path d="M6.6 3 Q1.4 12 6.6 21" fill="none" stroke="#9aa7b8" stroke-width="1.6"/></svg>
<svg style="left:1772.9px;top:460px;" width="30" height="30" viewBox="0 0 30 30"><path d="M12.13 3.76 L17.87 3.76 L18.40 7.65 L19.66 8.38 L23.30 6.89 L26.17 11.87 L23.07 14.27 L23.07 15.73 L26.17 18.13 L23.30 23.11 L19.66 21.62 L18.40 22.35 L17.87 26.24 L12.13 26.24 L11.60 22.35 L10.34 21.62 L6.70 23.11 L3.83 18.13 L6.93 15.73 L6.93 14.27 L3.83 11.87 L6.70 6.89 L10.34 8.38 L11.60 7.65 Z M19.50 15.00 A4.5 4.5 0 1 0 10.50 15.00 A4.5 4.5 0 1 0 19.50 15.00 Z" fill="#6e6e6e" fill-rule="evenodd"/><path d="M12.13 3.76 L17.87 3.76 L18.40 7.65 L19.66 8.38 L23.30 6.89 L26.17 11.87 L23.07 14.27 L23.07 15.73 L26.17 18.13 L23.30 23.11 L19.66 21.62 L18.40 22.35 L17.87 26.24 L12.13 26.24 L11.60 22.35 L10.34 21.62 L6.70 23.11 L3.83 18.13 L6.93 15.73 L6.93 14.27 L3.83 11.87 L6.70 6.89 L10.34 8.38 L11.60 7.65 Z" fill="none" stroke="#6e6e6e" stroke-width="1.1" stroke-linejoin="round"/></svg>
<svg style="left:1794px;top:479.6px;" width="14" height="8" viewBox="0 0 14 8"><path d="M1 0.8 H11.8 L6.4 6.2 Z" fill="#3a3a3a"/></svg>
<div style="left:1760.6px;top:505px;width:1.3px;height:42px;background:#cfcfcf;"></div>
<div style="left:1739.2px;top:547.6px;width:73px;height:1.2px;background:#dcdcdc;"></div>
<span class="t s" style="left:1755px;top:516.40px;font-size:21px;line-height:21px;color:#000;">.</span>
<span class="t s" style="left:1776.6px;top:517.40px;font-size:20.58px;line-height:20.58px;color:#000;letter-spacing:-0.653px;">Cou</span>
<span class="t s" style="left:1726.6px;top:633.00px;font-size:21px;line-height:21px;color:#8e8e8e;letter-spacing:0.656px;clip-path:inset(-10px 0 -10px 11.8px);">loaded.</span>
<span class="t s" style="left:1805px;top:633.00px;font-size:21px;line-height:21px;color:#2470b3;">L</span>
</section>
<section aria-label="Right tool strip">
<div style="left:1811.4px;top:0px;width:1.4px;height:781px;background:#c9c9c9;"></div>
<div style="left:1812.8px;top:0px;width:13px;height:781px;background:#f2f2f2;"></div>
<svg style="left:1812px;top:0px;" width="13" height="16" viewBox="0 0 13 16"><path d="M8.2 14.2 L11.6 0 H15.4 L12 14.2 Z" fill="#6a6a6a"/></svg>
<div style="left:1823.4px;top:26.7px;width:1.8px;height:1.7px;background:#7a2a1a;"></div>
<div style="left:1823.4px;top:33.0px;width:1.8px;height:1.7px;background:#7a2a1a;"></div>
<div style="left:1823.4px;top:39.2px;width:1.8px;height:1.7px;background:#7a2a1a;"></div>
<div style="left:1823.4px;top:50.300000000000004px;width:1.8px;height:1.7px;background:#7a2a1a;"></div>
<div style="left:1823.4px;top:56.900000000000006px;width:1.8px;height:1.7px;background:#7a2a1a;"></div>
<div style="left:1823.4px;top:74.60000000000001px;width:1.8px;height:1.7px;background:#7a2a1a;"></div>
<div style="left:1823.4px;top:81.10000000000001px;width:1.8px;height:1.7px;background:#7a2a1a;"></div>
<div style="left:1822.2px;top:44.6px;width:3px;height:4.199999999999996px;background:#e2a448;border-radius:1.6px 0 0 1.6px;"></div>
<div style="left:1823.2px;top:45.300000000000004px;width:2px;height:2.799999999999996px;background:#5c0e08;"></div>
<div style="left:1822.2px;top:65px;width:3px;height:6.900000000000006px;background:#e2a448;border-radius:1.6px 0 0 1.6px;"></div>
<div style="left:1823.2px;top:65.7px;width:2px;height:5.500000000000005px;background:#5c0e08;"></div>
<div style="left:1821.8px;top:146.7px;width:3px;height:10.0px;background:#e2a448;border-radius:1.6px 0 0 1.6px;"></div>
<div style="left:1822.8px;top:147.39999999999998px;width:2px;height:8.6px;background:#5c0e08;"></div>
<div style="left:1821.8px;top:165.8px;width:3px;height:5.899999999999977px;background:#e2a448;border-radius:1.6px 0 0 1.6px;"></div>
<div style="left:1822.8px;top:166.5px;width:2px;height:4.499999999999977px;background:#5c0e08;"></div>
<div style="left:1821.8px;top:176.7px;width:3px;height:13.300000000000011px;background:#e2a448;border-radius:1.6px 0 0 1.6px;"></div>
<div style="left:1822.8px;top:177.39999999999998px;width:2px;height:11.900000000000011px;background:#5c0e08;"></div>
<div style="left:1821.8px;top:193.3px;width:3px;height:6.699999999999989px;background:#e2a448;border-radius:1.6px 0 0 1.6px;"></div>
<div style="left:1822.8px;top:194.0px;width:2px;height:5.299999999999988px;background:#5c0e08;"></div>
<div style="left:1821.8px;top:205px;width:3px;height:6.699999999999989px;background:#e2a448;border-radius:1.6px 0 0 1.6px;"></div>
<div style="left:1822.8px;top:205.7px;width:2px;height:5.299999999999988px;background:#5c0e08;"></div>
<div style="left:1821.8px;top:213.3px;width:3px;height:6.699999999999989px;background:#e2a448;border-radius:1.6px 0 0 1.6px;"></div>
<div style="left:1822.8px;top:214.0px;width:2px;height:5.299999999999988px;background:#5c0e08;"></div>
<div style="left:1821.8px;top:225px;width:3px;height:5px;background:#e2a448;border-radius:1.6px 0 0 1.6px;"></div>
<div style="left:1822.8px;top:225.7px;width:2px;height:3.6px;background:#5c0e08;"></div>
<div style="left:1823.4px;top:300.2px;width:1.8px;height:1.7px;background:#7a2a1a;"></div>
<div style="left:1823.4px;top:306.2px;width:1.8px;height:1.7px;background:#7a2a1a;"></div>
<div style="left:1823.4px;top:312.2px;width:1.8px;height:1.7px;background:#7a2a1a;"></div>
<div style="left:1823.4px;top:329.2px;width:1.8px;height:1.7px;background:#7a2a1a;"></div>
<div style="left:1823.4px;top:335.2px;width:1.8px;height:1.7px;background:#7a2a1a;"></div>
<div style="left:1823.4px;top:348.2px;width:1.8px;height:1.7px;background:#7a2a1a;"></div>
<div style="left:1823.4px;top:366.2px;width:1.8px;height:1.7px;background:#7a2a1a;"></div>
<div style="left:1822.2px;top:318px;width:3px;height:6px;background:#e2a448;border-radius:1.6px 0 0 1.6px;"></div>
<div style="left:1823.2px;top:318.7px;width:2px;height:4.6px;background:#5c0e08;"></div>
<div style="left:1822.2px;top:338px;width:3px;height:7px;background:#e2a448;border-radius:1.6px 0 0 1.6px;"></div>
<div style="left:1823.2px;top:338.7px;width:2px;height:5.6px;background:#5c0e08;"></div>
<div style="left:1822.2px;top:353px;width:3px;height:9px;background:#e2a448;border-radius:1.6px 0 0 1.6px;"></div>
<div style="left:1823.2px;top:353.7px;width:2px;height:7.6px;background:#5c0e08;"></div>
<div style="left:1823.4px;top:453.2px;width:1.8px;height:1.7px;background:#7a2a1a;"></div>
<div style="left:1823.4px;top:474.2px;width:1.8px;height:1.7px;background:#7a2a1a;"></div>
<div style="left:1823.4px;top:478.7px;width:1.8px;height:1.7px;background:#7a2a1a;"></div>
<div style="left:1823.4px;top:493.7px;width:1.8px;height:1.7px;background:#7a2a1a;"></div>
<div style="left:1823.4px;top:498.2px;width:1.8px;height:1.7px;background:#7a2a1a;"></div>
<div style="left:1822.2px;top:462px;width:3px;height:7px;background:#e2a448;border-radius:1.6px 0 0 1.6px;"></div>
<div style="left:1823.2px;top:462.7px;width:2px;height:5.6px;background:#5c0e08;"></div>
<div style="left:1822.2px;top:485px;width:3px;height:5px;background:#e2a448;border-radius:1.6px 0 0 1.6px;"></div>
<div style="left:1823.2px;top:485.7px;width:2px;height:3.6px;background:#5c0e08;"></div>
<div style="left:1822.2px;top:505px;width:3px;height:4.5px;background:#e2a448;border-radius:1.6px 0 0 1.6px;"></div>
<div style="left:1823.2px;top:505.7px;width:2px;height:3.1px;background:#5c0e08;"></div>
<div style="left:1822.2px;top:513px;width:3px;height:7px;background:#e2a448;border-radius:1.6px 0 0 1.6px;"></div>
<div style="left:1823.2px;top:513.7px;width:2px;height:5.6px;background:#5c0e08;"></div>
<div style="left:1822.2px;top:525.5px;width:3px;height:4.5px;background:#e2a448;border-radius:1.6px 0 0 1.6px;"></div>
<div style="left:1823.2px;top:526.2px;width:2px;height:3.1px;background:#5c0e08;"></div>
<div style="left:1822.2px;top:535px;width:3px;height:3px;background:#e2a448;border-radius:1.6px 0 0 1.6px;"></div>
<div style="left:1823.2px;top:535.7px;width:2px;height:1.6px;background:#5c0e08;"></div>
<div style="left:1822.2px;top:543px;width:3px;height:7px;background:#e2a448;border-radius:1.6px 0 0 1.6px;"></div>
<div style="left:1823.2px;top:543.7px;width:2px;height:5.6px;background:#5c0e08;"></div>
<div style="left:1822.2px;top:553px;width:3px;height:6px;background:#e2a448;border-radius:1.6px 0 0 1.6px;"></div>
<div style="left:1823.2px;top:553.7px;width:2px;height:4.6px;background:#5c0e08;"></div>
<svg style="left:1812px;top:106px;" width="13" height="48" viewBox="0 0 13 48"><path d="M10 7 L13 5.6 M9.6 13 L13 11.6 M9.6 19 L13 17.6 M10 25 L13 23.6" stroke="#8a8a8a" stroke-width="2.6" fill="none"/></svg>
<svg style="left:1812px;top:282px;" width="13" height="12" viewBox="0 0 13 12"><rect x="10.6" y="2" width="6" height="7.6" fill="#6a6a6a"/></svg>
<svg style="left:1812px;top:362px;" width="13" height="22" viewBox="0 0 13 22"><path d="M7.6 6 Q8 12.6 13.4 13.6" fill="none" stroke="#1a1a1a" stroke-width="1.7"/><path d="M9 11 Q10 13 13.4 12.4" fill="none" stroke="#e09a30" stroke-width="1"/></svg>
<svg style="left:1812px;top:414px;" width="13" height="28" viewBox="0 0 13 28"><path d="M13.4 4.2 H11.6 Q9.8 4.2 9.8 6 V22.4 Q9.8 24.2 11.6 24.2 H13.4" fill="none" stroke="#e8474a" stroke-width="1.7"/></svg>
</section>
</div></body></html>
